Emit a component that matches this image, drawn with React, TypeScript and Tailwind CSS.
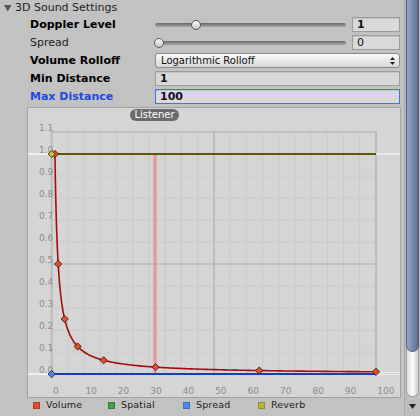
import React from "react";

const X = (u: number) => 24.7 + u * 3.243;
const Y = (v: number) => 267 - 220 * v;

function Curve() {
  const pts: string[] = [`M ${X(0)} ${Y(1)}`, `L ${X(1)} ${Y(1)}`];
  for (let i = 1; i <= 400; i++) {
    const d = Math.pow(100, i / 400);
    pts.push(`L ${X(d).toFixed(2)} ${Y(1 / d).toFixed(2)}`);
  }
  return <path d={pts.join(" ")} fill="none" stroke="#a30d0d" strokeWidth={1.6} />;
}

function Diamond({ x, y, fill, stroke }: { x: number; y: number; fill: string; stroke: string }) {
  const r = 3.6;
  return (
    <polygon
      points={`${x},${y - r} ${x + r},${y} ${x},${y + r} ${x - r},${y}`}
      fill={fill}
      stroke={stroke}
      strokeWidth={0.9}
    />
  );
}

function Graph() {
  const minorX: number[] = [];
  for (let u = 5; u < 100; u += 5) if (u !== 50) minorX.push(u);
  const minorY: number[] = [];
  for (let i = 1; i <= 10; i++) if (i !== 5) minorY.push(i / 10);
  const yLabels: number[] = [];
  for (let i = 0; i <= 11; i++) yLabels.push(i / 10);
  const xLabels = [0, 10, 20, 30, 40, 50, 60, 70, 80, 90, 100];
  const keys = [1, 2, 4, 8, 16, 32, 64, 100];
  return (
    <div className="relative ml-[27px] mt-[3px] h-[291px] w-[374px] bg-[#d5d5d5] shadow-[inset_0_0_0_1px_#a3a3a3]">
      <svg className="absolute left-0 top-0" width={374} height={291} viewBox="0 0 374 291">
        {minorX.map((u) => (
          <line key={"mx" + u} x1={X(u)} x2={X(u)} y1={Y(1.1)} y2={Y(0)} stroke="#c9c9c9" strokeWidth={1} />
        ))}
        {minorY.map((v) => (
          <line key={"my" + v} x1={X(0)} x2={X(100)} y1={Y(v)} y2={Y(v)} stroke="#cacaca" strokeWidth={1} />
        ))}
        {[0, 50, 100].map((u) => (
          <line key={"Mx" + u} x1={X(u)} x2={X(u)} y1={Y(1.1) - 0.8} y2={Y(0)} stroke="#b8b8b8" strokeWidth={1.7} />
        ))}
        {[0.5, 1.1].map((v) => (
          <line key={"My" + v} x1={X(0)} x2={X(100)} y1={Y(v)} y2={Y(v)} stroke="#b8b8b8" strokeWidth={1.7} />
        ))}
        {yLabels.map((v) => (
          <text
            key={"yl" + v}
            x={26.3}
            y={Y(v) - 1}
            textAnchor="end"
            fontSize={9}
            fill="#8c8c8c"
            fontFamily="DejaVu Sans, sans-serif"
          >
            {v.toFixed(1)}
          </text>
        ))}
        {xLabels.map((u) => (
          <text
            key={"xl" + u}
            x={X(u) + 1.3}
            y={287}
            fontSize={9}
            fill="#8c8c8c"
            fontFamily="DejaVu Sans, sans-serif"
          >
            {u}
          </text>
        ))}
        {/* out-of-range extensions */}
        <line x1={1} x2={X(0)} y1={Y(1)} y2={Y(1)} stroke="#f2f2f2" strokeWidth={1.8} />
        <line x1={X(100)} x2={373} y1={Y(1)} y2={Y(1)} stroke="#ececec" strokeWidth={1.8} />
        <line x1={1} x2={X(0)} y1={Y(0)} y2={Y(0)} stroke="#f2f2f2" strokeWidth={1.8} />
        <line x1={X(100)} x2={373} y1={Y(0) - 1.5} y2={Y(0) - 1.5} stroke="#ececec" strokeWidth={1} />
        <line x1={X(100)} x2={373} y1={Y(0) + 0.5} y2={Y(0) + 0.5} stroke="#ececec" strokeWidth={1} />
        {/* listener */}
        <rect x={126.5} y={Y(1)} width={3} height={Y(0) - Y(1)} fill="#e88a8a" />
        <rect x={127.5} y={Y(1)} width={1} height={Y(0) - Y(1)} fill="#eea4a4" />
        <Curve />
        <line x1={X(0)} x2={X(100)} y1={Y(0)} y2={Y(0)} stroke="#1b3db2" strokeWidth={2} />
        <line x1={X(0)} x2={X(100)} y1={Y(1)} y2={Y(1)} stroke="#5a5800" strokeWidth={2} />
        {keys.map((d) => (
          <Diamond key={"k" + d} x={X(d)} y={Y(1 / d)} fill="#e5502c" stroke="#3c160c" />
        ))}
        <Diamond x={X(0)} y={Y(1)} fill="#c9c23c" stroke="#34340a" />
        <Diamond x={X(0)} y={Y(0)} fill="#4a8ae0" stroke="#10285c" />
      </svg>
      <div className="absolute left-[103px] top-[2px] flex h-[12px] w-[49px] items-center justify-center rounded-full bg-[#6b6b6b] text-[10px] leading-[12px] text-white">
        Listener
      </div>
    </div>
  );
}

function Slider({ thumb }: { thumb: number }) {
  return (
    <div className="relative h-[15px] w-[191px]">
      <div className="absolute left-0 right-0 top-[6px] h-[4px] rounded-full bg-gradient-to-b from-[#6a6a6a] to-[#a8a8a8]" />
      <div
        className="absolute top-[3px] h-[10px] w-[10px] rounded-full border border-[#5a5a5a] bg-gradient-to-b from-[#fafafa] to-[#c6c6c6]"
        style={{ left: thumb }}
      />
    </div>
  );
}

function Field({ value, bold, w, focus }: { value: string; bold?: boolean; w: string; focus?: boolean }) {
  return (
    <div
      className={
        "flex h-[15px] items-center border bg-[#d9d9d9] pl-[4px] text-[11px] leading-[13px] text-[#111] shadow-[inset_0_1px_0_#c4c4c4] " +
        (bold ? "font-bold " : "") +
        (focus ? "border-[#4a70e6] " : "border-[#9d9d9d] ") +
        w
      }
    >
      {value}
    </div>
  );
}

function Row({ label, bold = true, blue, children }: { label: string; bold?: boolean; blue?: boolean; children: React.ReactNode }) {
  return (
    <div className="flex h-[15px] items-center">
      <div
        className={
          "w-[155px] pl-[30px] text-[11px] leading-[15px] " +
          (bold ? "font-bold " : "") +
          (blue ? "text-[#1d48e4]" : bold ? "text-black" : "text-[#1e1e1e]")
        }
      >
        {label}
      </div>
      <div className="flex items-center">{children}</div>
    </div>
  );
}

function Legend() {
  const items = [
    { name: "Volume", c: "bg-[#e24c2c]" },
    { name: "Spatial", c: "bg-[#3fa23f]" },
    { name: "Spread", c: "bg-[#4a8ae6]" },
    { name: "Reverb", c: "bg-[#b6b23a]" },
  ];
  return (
    <div className="flex h-[18px] items-center pb-[4px] pl-[33px]">
      {items.map((it) => (
        <div key={it.name} className="flex w-[75px] items-center gap-[6px]">
          <div className={"h-[7px] w-[7px] border border-black/20 " + it.c} />
          <span className="text-[9.5px] leading-[12px] tracking-[0.15px] text-[#1e1e1e]">{it.name}</span>
        </div>
      ))}
    </div>
  );
}

function Scrollbar() {
  return (
    <div className="flex h-[416px] w-[16px] flex-col bg-[#bdbdbd] pl-[2px] pr-[1px] shadow-[inset_1px_0_0_#a9a9a9]">
      <div className="relative h-[397px] w-[13px] rounded-b-[7px] border border-t-0 border-[#a2a2a2] bg-gradient-to-r from-[#dedede] via-[#fbfbfb] to-[#cfcfcf]">
        <div className="absolute left-[-1px] top-0 h-[352px] w-[13px] rounded-b-[7px] border border-t-0 border-[#4f5d7c] bg-gradient-to-r from-[#99a7c3] via-[#7789ab] to-[#5d6d8f]" />
      </div>
      <div className="flex flex-1 items-center justify-center pr-[1px]">
        <svg width="7" height="5" viewBox="0 0 7 5">
          <polygon points="0,0 7,0 3.5,5" fill="#222" />
        </svg>
      </div>
    </div>
  );
}

export default function App() {
  return (
    <div className="flex h-[416px] w-[420px] overflow-hidden bg-[#c2c2c2] font-['DejaVu_Sans',sans-serif]">
      <div className="flex w-[404px] flex-col">
        <div className="flex h-[17px] items-center pb-[1px] pl-[4px]">
          <svg width="8" height="7" viewBox="0 0 8 7" className="mr-[3px]">
            <polygon points="0,0 7.5,0 3.75,6.5" fill="#555" />
          </svg>
          <span className="text-[11px] leading-[14px] text-[#1e1e1e]">3D Sound Settings</span>
        </div>
        <div className="flex flex-col gap-[3px] pr-[4px]">
          <Row label="Doppler Level">
            <Slider thumb={36} />
            <div className="ml-[6px]">
              <Field value="1" bold w="w-[48px]" />
            </div>
          </Row>
          <Row label="Spread" bold={false}>
            <Slider thumb={-1} />
            <div className="ml-[6px]">
              <Field value="0" w="w-[48px]" />
            </div>
          </Row>
          <Row label="Volume Rolloff">
            <div className="flex h-[15px] w-[245px] items-center justify-between rounded-[3px] border border-[#8a8a8a] bg-gradient-to-b from-[#fbfbfb] to-[#d6d6d6] pl-[5px] pr-[4px]">
              <span className="text-[10px] leading-[13px] text-[#111]">Logarithmic Rolloff</span>
              <svg width="5" height="8" viewBox="0 0 5 8">
                <polygon points="2.5,0 5,3 0,3" fill="#222" />
                <polygon points="0,5 5,5 2.5,8" fill="#222" />
              </svg>
            </div>
          </Row>
          <Row label="Min Distance">
            <Field value="1" bold w="w-[245px]" />
          </Row>
          <Row label="Max Distance" blue>
            <Field value="100" bold focus w="w-[245px]" />
          </Row>
        </div>
        <Graph />
        <Legend />
      </div>
      <Scrollbar />
    </div>
  );
}
